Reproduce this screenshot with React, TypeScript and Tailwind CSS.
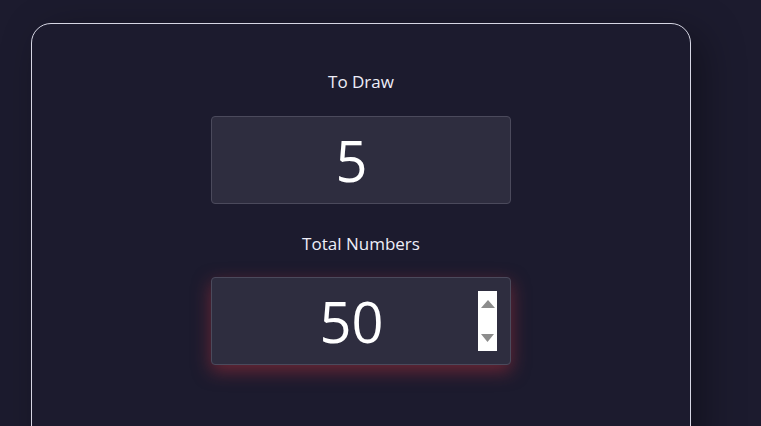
export default function App() {
  return (
    <div
      className="h-[426px] w-full overflow-hidden bg-[#1c1b2e] pl-[31px] pt-[23px]"
      style={{ fontFamily: '"Open Sans", "Noto Sans", sans-serif' }}
    >
      <div className="flex h-[430px] w-[660px] flex-col items-center rounded-[20px] border border-[#d6d6e4] bg-[#1c1b2e] pt-[46px] shadow-[12px_10px_40px_rgba(0,0,0,0.35)]">
        <label className="text-[17px] leading-6 text-[#eeeef8]">To Draw</label>
        <div className="mt-[22px] flex h-[88px] w-[300px] items-center justify-center rounded-[4px] border border-[#4b4a5c] bg-[#2e2d3f] pr-[19px] text-[56px] leading-none text-white">
          5
        </div>

        <label className="mt-[28px] text-[17px] leading-6 text-[#eeeef8]">Total Numbers</label>
        <div className="relative mt-[21px] flex h-[88px] w-[300px] items-center justify-center rounded-[4px] border border-[#4b4a5c] bg-[#2e2d3f] pr-[19px] text-[56px] leading-none text-white shadow-[0_6px_18px_rgba(190,50,60,0.5)]">
          50
          <div className="absolute right-[13px] top-[13px] flex h-[60px] w-[19px] flex-col items-center justify-between bg-white py-[9px]">
            <svg width="14" height="8" viewBox="0 0 14 8">
              <path d="M7 0 L14 8 L0 8 Z" fill="#8c8c8c" />
            </svg>
            <svg width="13" height="8" viewBox="0 0 13 8">
              <path d="M0 0 L13 0 L6.5 8 Z" fill="#8c8c8c" />
            </svg>
          </div>
        </div>
      </div>
    </div>
  );
}
